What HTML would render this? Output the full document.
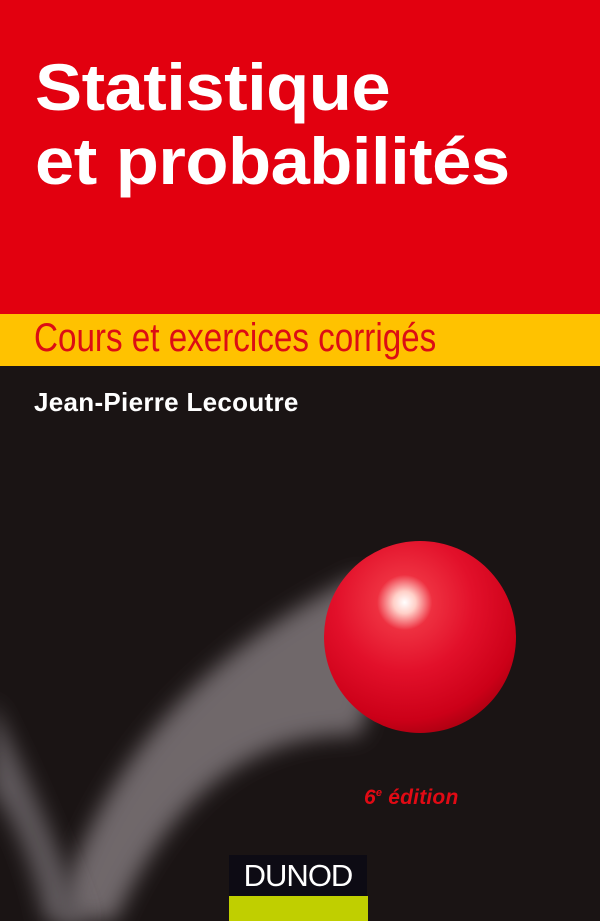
<!DOCTYPE html>
<html><head><style>
body{margin:0;width:600px;height:921px;overflow:hidden;background:#1a1414;font-family:"Liberation Sans",sans-serif;position:relative}
.red{position:absolute;left:0;top:0;width:600px;height:314px;background:#e2000f}
.yel{position:absolute;left:0;top:314px;width:600px;height:52px;background:#ffc200}
h1{position:absolute;left:35px;top:50px;margin:0;color:#fff;font-size:66px;line-height:74px;font-weight:bold;letter-spacing:-0.5px;transform:scaleX(1.07);transform-origin:left;white-space:nowrap}
.sub{position:absolute;left:34px;top:314px;color:#dc0d14;font-size:40px;line-height:48px;transform:scaleX(0.83);transform-origin:left;white-space:nowrap}
.auth{position:absolute;left:34px;top:387px;color:#fff;font-size:26px;font-weight:bold;letter-spacing:0.3px}
.ed{position:absolute;left:364px;top:786px;color:#e10a14;font-size:21px;font-weight:bold;font-style:italic;letter-spacing:0.2px}
.ed sup{font-size:11px}
.dn{position:absolute;left:229px;top:855px;width:138px;height:41px;background:#0d0b14;color:#fff;font-size:31px;text-align:center;line-height:41px;letter-spacing:-1px}
.lime{position:absolute;left:229px;top:896px;width:139px;height:25px;background:#c0cf00}
svg{position:absolute;left:0;top:0}
</style></head><body>
<svg width="600" height="921">
<defs>
<filter id="b" x="-50%" y="-50%" width="200%" height="200%"><feGaussianBlur stdDeviation="11"/></filter>
<radialGradient id="ball" cx="0.42" cy="0.32" r="0.72">
<stop offset="0" stop-color="#fff"/>
<stop offset="0.08" stop-color="#ffd0c8"/>
<stop offset="0.2" stop-color="#ee3040"/>
<stop offset="0.5" stop-color="#e2102a"/>
<stop offset="0.85" stop-color="#cc0018"/>
<stop offset="1" stop-color="#a80010"/>
</radialGradient>
</defs>
<path d="M55 921 Q120 690 360 575 L400 600 L360 735 Q200 730 115 921 Z" fill="#6f686b" filter="url(#b)"/>
<path d="M-10 700 Q45 810 85 921 L45 921 Q25 830 -10 790 Z" fill="#5e585b" filter="url(#b)"/>
<circle cx="420" cy="637" r="96" fill="url(#ball)"/>
</svg>
<div class="red"></div><div class="yel"></div>
<h1>Statistique<br>et probabilités</h1>
<div class="sub">Cours et exercices corrigés</div>
<div class="auth">Jean-Pierre Lecoutre</div>
<div class="ed">6<sup>e</sup> édition</div>
<div class="dn">DUNOD</div>
<div class="lime"></div>
</body></html>
